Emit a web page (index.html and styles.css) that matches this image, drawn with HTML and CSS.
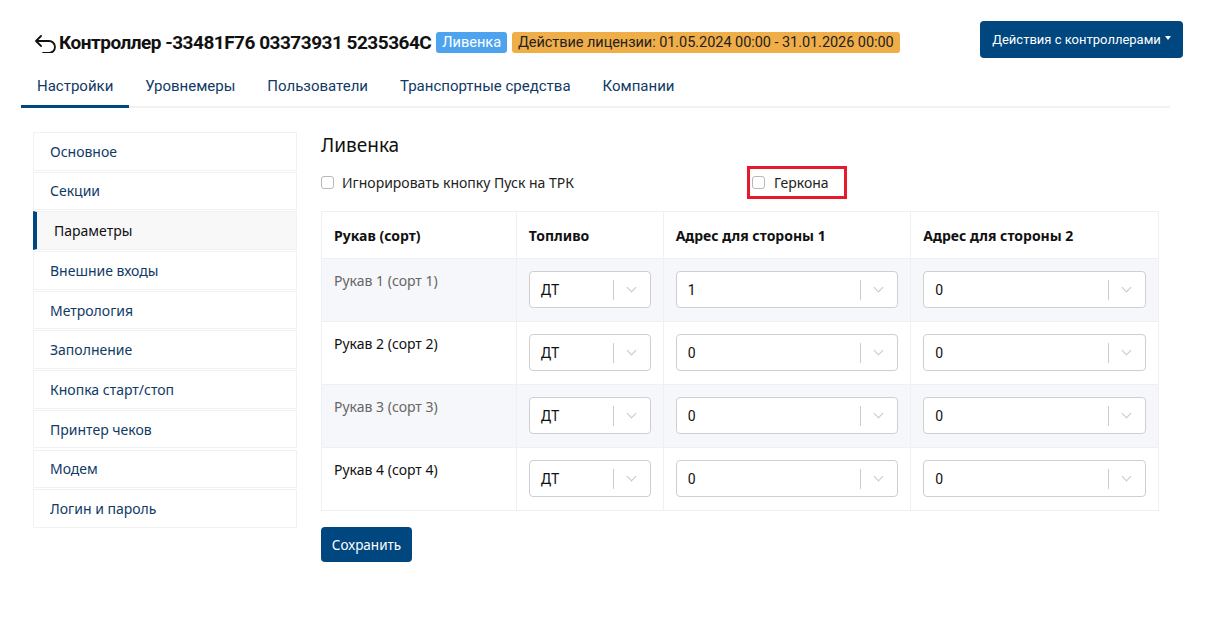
FILE: index.html
```html
<!DOCTYPE html>
<html lang="ru">
<head>
<meta charset="utf-8">
<link rel="stylesheet" href="styles.css">
</head>
<body>
<div class="page">
  <header class="header">
    <div class="title-row">
      <svg class="back" width="24" height="20" viewBox="0 0 24 20"><path d="M7 3 L2 8 L7 13 M2 8 H15 A6 6 0 0 1 15 20 H9" fill="none" stroke="#111" stroke-width="1.8" stroke-linecap="round" stroke-linejoin="round"/></svg>
      <h1 class="title">Контроллер -33481F76 03373931 5235364C</h1>
      <span class="badge badge-blue">Ливенка</span>
      <span class="badge badge-orange">Действие лицензии: 01.05.2024 00:00 - 31.01.2026 00:00</span>
    </div>
    <button class="btn-actions">Действия с контроллерами <span class="caret"></span></button>
  </header>
  <nav class="tabs">
    <a class="tab active">Настройки</a>
    <a class="tab">Уровнемеры</a>
    <a class="tab">Пользователи</a>
    <a class="tab">Транспортные средства</a>
    <a class="tab">Компании</a>
  </nav>
  <div class="main">
    <ul class="side">
      <li class="side-item">Основное</li>
      <li class="side-item">Секции</li>
      <li class="side-item active">Параметры</li>
      <li class="side-item">Внешние входы</li>
      <li class="side-item">Метрология</li>
      <li class="side-item">Заполнение</li>
      <li class="side-item">Кнопка старт/стоп</li>
      <li class="side-item">Принтер чеков</li>
      <li class="side-item">Модем</li>
      <li class="side-item">Логин и пароль</li>
    </ul>
    <section class="content">
      <h2 class="section-title">Ливенка</h2>
      <div class="checks">
        <label class="check check-1"><span class="box"></span>Игнорировать кнопку Пуск на ТРК</label>
        <label class="check check-2"><span class="box"></span>Геркона</label>
      </div>
      <table class="grid">
        <thead>
          <tr><th class="c1">Рукав (сорт)</th><th class="c2">Топливо</th><th class="c3">Адрес для стороны 1</th><th class="c4">Адрес для стороны 2</th></tr>
        </thead>
        <tbody>
          <tr class="odd"><td class="muted">Рукав 1 (сорт 1)</td><td><div class="sel"><span class="val">ДТ</span><span class="sep"></span><span class="chev"></span></div></td><td><div class="sel"><span class="val">1</span><span class="sep"></span><span class="chev"></span></div></td><td><div class="sel"><span class="val">0</span><span class="sep"></span><span class="chev"></span></div></td></tr>
          <tr><td>Рукав 2 (сорт 2)</td><td><div class="sel"><span class="val">ДТ</span><span class="sep"></span><span class="chev"></span></div></td><td><div class="sel"><span class="val">0</span><span class="sep"></span><span class="chev"></span></div></td><td><div class="sel"><span class="val">0</span><span class="sep"></span><span class="chev"></span></div></td></tr>
          <tr class="odd"><td class="muted">Рукав 3 (сорт 3)</td><td><div class="sel"><span class="val">ДТ</span><span class="sep"></span><span class="chev"></span></div></td><td><div class="sel"><span class="val">0</span><span class="sep"></span><span class="chev"></span></div></td><td><div class="sel"><span class="val">0</span><span class="sep"></span><span class="chev"></span></div></td></tr>
          <tr><td>Рукав 4 (сорт 4)</td><td><div class="sel"><span class="val">ДТ</span><span class="sep"></span><span class="chev"></span></div></td><td><div class="sel"><span class="val">0</span><span class="sep"></span><span class="chev"></span></div></td><td><div class="sel"><span class="val">0</span><span class="sep"></span><span class="chev"></span></div></td></tr>
        </tbody>
      </table>
      <button class="btn-save">Сохранить</button>
    </section>
  </div>
</div>
</body>
</html>
```
FILE: styles.css
```css
* { box-sizing: border-box; }
html, body { margin: 0; padding: 0; background: #fff; }
body { font-family: "Noto Sans", "Open Sans", sans-serif; font-size: 14px; color: #111; }
.page { width: 1208px; height: 618px; overflow: hidden; }

.header { display: flex; justify-content: space-between; align-items: flex-start; padding: 21px 25px 0 34px; height: 58px; }
.title-row { display: flex; align-items: center; margin-top: 10px; }
.back { margin-right: 1px; }
.title { font-family: Roboto, "Liberation Sans", sans-serif; font-weight: 700; font-size: 19px; margin: 0; letter-spacing: -0.5px; color: #111; }
.badge { font-family: Roboto, "Liberation Sans", sans-serif; font-size: 14.5px; line-height: 21px; padding: 0 6px; border-radius: 3px; margin-left: 5px; }
.badge-blue { background: #4ea3ef; color: #fff; }
.badge-orange { background: #f0ae48; color: #222; letter-spacing: -0.05px; }
.btn-actions { font-family: Roboto, "Liberation Sans", sans-serif; background: #00467f; color: #fff; border: none; border-radius: 4px; width: 203px; height: 37px; font-size: 13px; display: flex; align-items: center; justify-content: center; gap: 4px; padding: 0; }
.caret { width: 0; height: 0; border-left: 3px solid transparent; border-right: 3px solid transparent; border-top: 4px solid #fff; margin-top: -3px; }

.tabs { display: flex; margin: 11px 38px 0 21px; border-bottom: 2px solid #f1f1f1; height: 39px; }
.tab { font-family: Roboto, "Liberation Sans", sans-serif; font-size: 15px; color: #0f3a66; padding: 8px 16px 0; height: 39px; margin-bottom: -2px; }
.tab.active { border-bottom: 3px solid #00467f; }

.main { display: flex; padding: 24px 0 0 33px; }
.side { list-style: none; margin: 0; padding: 0; width: 264px; flex: none; }
.side-item { height: 38.5px; margin-bottom: 1.2px; border: 1px solid #f1f1f1; display: flex; align-items: center; padding-left: 16px; color: #0f3a66; font-size: 14px; }
.side-item.active { border-left: 4px solid #00467f; background: #f8f8f8; padding-left: 17px; color: #111; }

.content { margin-left: 24px; width: 838px; }
.section-title { font-weight: 400; font-size: 19px; margin: 1px 0 0; line-height: 24px; color: #111; }
.checks { display: flex; margin-top: 9px; height: 32px; align-items: center; }
.check { display: flex; align-items: center; color: #222; font-size: 14px; }
.check-1 { width: 426px; }
.check-2 { border: 3px solid #e8192c; height: 33px; width: 100px; padding-left: 2px; }
.box { width: 13px; height: 13px; border: 1px solid #b8b8b8; border-radius: 3px; margin-right: 8px; background: #fff; }
.check-2 .box { margin-right: 9px; }

.grid { border-collapse: collapse; width: 838px; margin-top: 13px; }
.grid th, .grid td { border: 1px solid #eef0f4; padding: 12px; text-align: left; vertical-align: top; }
.grid th { font-weight: 700; font-size: 14px; height: 47px; padding-top: 14px; color: #111; }
.grid td { height: 63px; padding-top: 12px; font-size: 14px; color: #111; }
.grid tr.odd td { background: #f5f7fa; }
.grid td.muted { color: #666; }
.c1 { width: 195px; } .c2 { width: 147px; } .c3 { width: 248px; } .c4 { width: 248px; }
.sel { height: 37px; border: 1px solid #cfcfcf; border-radius: 4px; background: #fff; display: flex; align-items: center; }
.val { flex: 1; padding-left: 11px; font-family: Roboto, "Liberation Sans", sans-serif; font-size: 14px; color: #111; }
.sep { width: 1px; height: 20px; background: #cccccc; }
.chev { width: 36px; height: 20px; position: relative; }
.chev::after { content: ""; position: absolute; left: 14px; top: 4px; width: 6px; height: 6px; border-right: 1.5px solid #c8c8c8; border-bottom: 1.5px solid #c8c8c8; transform: rotate(45deg); }

.btn-save { margin-top: 16px; background: #00467f; color: #fff; border: none; border-radius: 4px; width: 91px; height: 35px; font-family: "Noto Sans", sans-serif; font-size: 13.5px; }
```
